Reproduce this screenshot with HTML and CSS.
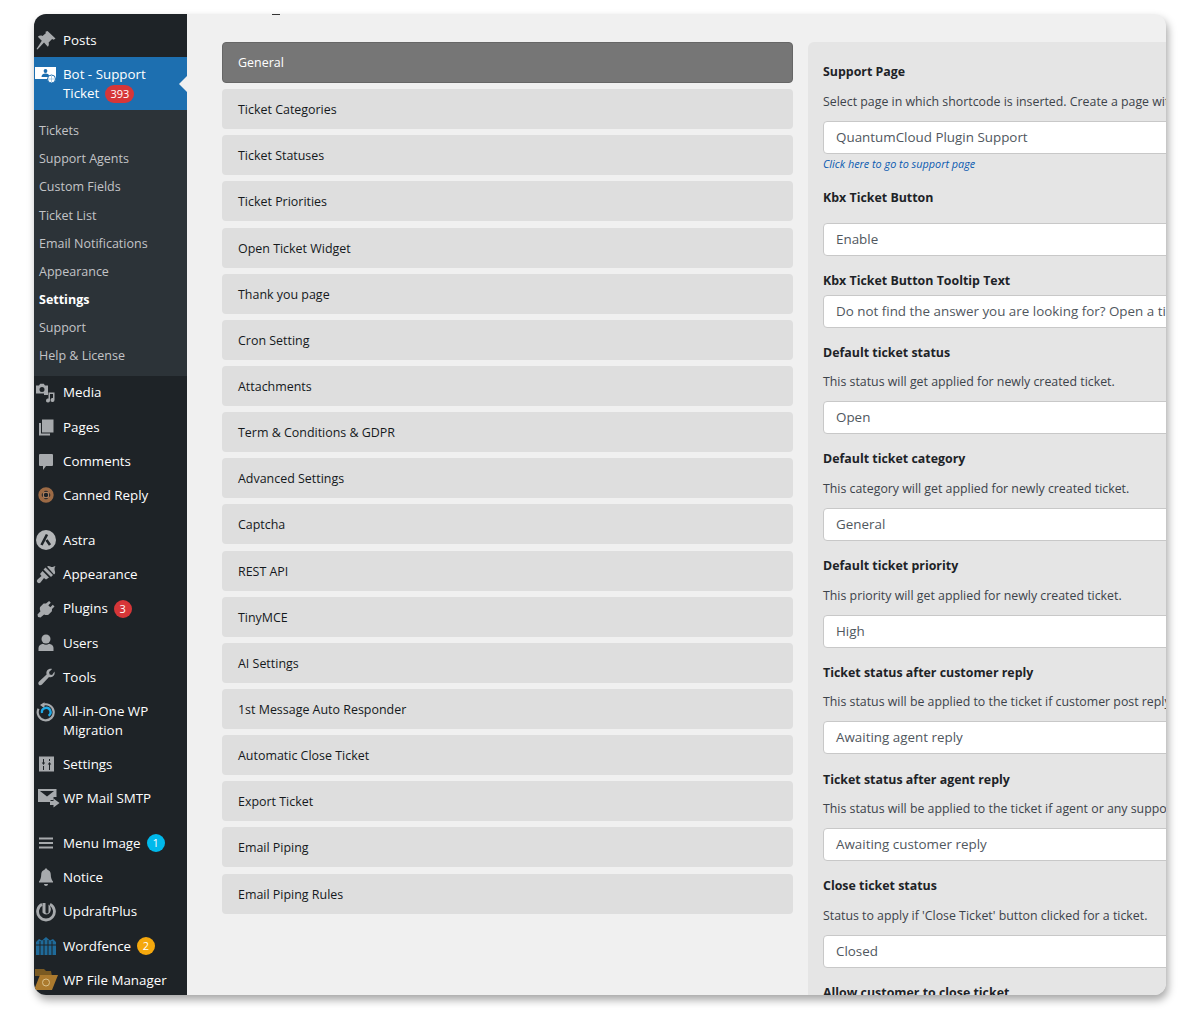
FILE: index.html
```html
<!DOCTYPE html>
<html lang="en">
<head>
<meta charset="utf-8">
<title>Support Ticket Settings</title>
<link rel="stylesheet" href="styles.css">
</head>
<body>
<div class="window">
  <nav class="sidebar">
    <a class="item"><svg class="ic" viewBox="0 0 20 20"><path d="M11.500 1l8 7.500-1.800 1.200-1.600-.7-3.500 3.500c.6 1.800.2 3.200-.8 4.300L8 12.500 1.500 19.500l-1-.5 5.300-8.300-4-4c1.300-1.100 3-1.400 4.700-.7L9.800 3.200 9.500 1.700z"/></svg><span>Posts</span></a>
    <div class="current">
      <svg class="ic-bot" viewBox="0 0 21 17"><path fill="#fff" d="M0 0h21v12H0z"/><circle cx="10.500" cy="4" r="1.900" fill="#1d6fb0"/><path fill="#1d6fb0" d="M6.500 10c0-2.500 1.800-3.500 4-3.500s4 1 4 3.500z"/><circle cx="16.500" cy="12" r="4" fill="#fff" stroke="#1d6fb0"/><path d="M16.500 8.500v7M13 12h7" stroke="#9dc3e0" stroke-width=".8"/></svg>
      <span>Bot - Support<br>Ticket<b class="badge red wide">393</b></span>
      <i class="arrow"></i>
    </div>
    <ul class="sub">
      <li>Tickets</li><li>Support Agents</li><li>Custom Fields</li><li>Ticket List</li><li>Email Notifications</li><li>Appearance</li><li class="on">Settings</li><li>Support</li><li>Help &amp; License</li>
    </ul>
    <div class="group first">
      <a class="item"><svg class="ic" viewBox="0 0 20 20"><path fill-rule="evenodd" d="M0 2.500h3l1.200-1.800h3.600L9 2.500h3v9.500H8v-1.500H0zM6 4a2.500 2.500 0 1 0 0 5 2.500 2.500 0 0 0 0-5z"/><path d="M12.500 9.500H18.500v7.500a2 2 0 1 1-1.500-1.900V11h-3v6.500a2 2 0 1 1-1.500-1.900z"/></svg><span>Media</span></a>
      <a class="item"><svg class="ic" viewBox="0 0 20 20"><path d="M6 2.500h11.500v13H6z"/><path d="M3 6h2v10.500h9V18.500H3z"/></svg><span>Pages</span></a>
      <a class="item"><svg class="ic" viewBox="0 0 20 20"><path d="M4 3h12a1 1 0 0 1 1 1v10a1 1 0 0 1-1 1h-6l-3 4v-4H4a1 1 0 0 1-1-1V4a1 1 0 0 1 1-1z"/></svg><span>Comments</span></a>
      <a class="item"><svg class="ic" viewBox="0 0 20 20"><circle cx="10" cy="10" r="6" fill="none" stroke="#9c6a45" stroke-width="3.400"/><path d="M5 5l10 10M15 5L5 15" stroke="#9c6a45" stroke-width="2.500"/><circle cx="10" cy="10" r="2.800" fill="#1e2327" stroke="#b98a66"/></svg><span>Canned Reply</span></a>
    </div>
    <div class="group">
      <a class="item"><svg class="ic" viewBox="0 0 20 20"><circle cx="10" cy="10" r="10" fill="#b4b6b8"/><path fill="none" stroke="#1e2327" stroke-width="2.600" d="M11 4.500L5.500 15M10.500 10l3.500 5"/></svg><span>Astra</span></a>
      <a class="item"><svg class="ic" viewBox="0 0 20 20"><path d="M9.500 3.500l7.500 7.500-2 2-7.500-7.500z"/><path d="M11 2.500c2-1.500 3.500.5 5 .5 1.300 0 2.500-.7 3.500-1-.7 1-1 2-1 3 0 1.500 1 3 .5 4.500l-1 1z"/><path d="M6.500 7l6.500 6.500-3 2-2-1.500-3.500 4.500a1.500 1.500 0 0 1-3-3l4-3.500-1.500-2z"/></svg><span>Appearance</span></a>
      <a class="item"><svg class="ic" viewBox="0 0 20 20"><path d="M13.100 2l1.700 1.700-2.500 2.500 2 2 2.500-2.500L18.500 7.400 16 10l-.1 2.300-3.500 3.500c-1.500.5-3 .3-4.300-.4L4.500 18.500 2 18l-.5-2.500 3-3.200c-.7-1.300-.9-2.800-.4-4.300l3.500-3.500L10 4.400z"/></svg><span>Plugins</span><b class="badge red">3</b></a>
      <a class="item"><svg class="ic" viewBox="0 0 20 20"><circle cx="10" cy="6" r="4.500"/><path d="M2.500 18v-3c0-2.500 2.500-4 4.500-4.200 1.800 1.200 4.200 1.200 6 0 2 .2 4.500 1.700 4.500 4.200v3z"/></svg><span>Users</span></a>
      <a class="item"><svg class="ic" viewBox="0 0 20 20"><path d="M18.500 4.500c.5 2-.1 4-1.700 5-1.300.8-2.700.8-3.800.4L6 17.500c-1 1-2.300 1-3.100.2s-.8-2.100.2-3.100l7.500-7.200c-.4-1.200-.3-2.600.5-3.800 1-1.500 3-2.100 5-1.700l-3 3 .5 2.500 2.500.6z"/></svg><span>Tools</span></a>
      <a class="item two"><svg class="ic" viewBox="0 0 20 20"><path fill="none" stroke-width="2.200" stroke="#a7aaad" d="M6 3.200a8 8 0 1 1-3.500 3.600"/><path d="M8.500.2v6L4 3z"/><path fill="none" stroke="#1fa9e6" stroke-width="2.300" d="M6 11a4.300 4.300 0 1 1 6.500 2.800"/></svg><span>All-in-One WP<br>Migration</span></a>
      <a class="item"><svg class="ic" viewBox="0 0 20 20"><path fill-rule="evenodd" d="M3 2.500h15v15H3zM7 5v3.500H5.700L7.500 11 9.200 8.500H8V5zM7 12v4h1v-4zM13 5v2h1V5zM13.500 8L11.700 10.500H13V16h1v-5.500h1.300z"/></svg><span>Settings</span></a>
      <a class="item"><svg class="ic mail" viewBox="0 0 24 20"><path d="M1 1h18.500v8h-3v3h-3v2H1zM3 3l7 5.500L17 3z" fill-rule="evenodd"/><path d="M16.500 10.500l6 4.500-6 4.500V17H13v-4h3.500z"/></svg><span>WP Mail SMTP</span></a>
    </div>
    <div class="group">
      <a class="item"><svg class="ic" viewBox="0 0 20 20"><path d="M3 4.500h14v2H3zM3 9h14v2H3zM3 13.500h14v2H3z"/></svg><span>Menu Image</span><b class="badge blue">1</b></a>
      <a class="item"><svg class="ic" viewBox="0 0 20 20"><path d="M10 1.500c.8 0 1.300.5 1.400 1.200 2.300.6 3.400 2.500 3.400 5 0 3 .8 5 2.200 6.800v1H3v-1c1.400-1.800 2.200-3.800 2.200-6.800 0-2.500 1.100-4.400 3.400-5 .1-.7.600-1.200 1.400-1.200zM8 17h4c0 1.200-.9 2-2 2s-2-.8-2-2z"/></svg><span>Notice</span></a>
      <a class="item"><svg class="ic" viewBox="0 0 20 20"><path fill="none" stroke="#a7aaad" stroke-width="2.800" d="M6 2.200a8.400 8.400 0 1 0 8 0"/><path d="M6.500 1h3v9a1.500 1.500 0 0 0 3 0V2.500a6 6 0 0 1 1.500 8 4.500 4.500 0 0 1-7.500 0z"/></svg><span>UpdraftPlus</span></a>
      <a class="item"><svg class="ic" viewBox="0 0 20 20"><path fill="#1f6a99" d="M0 6l3-3 3 1.500L10 1l4 3.500L17 3l3 3v13H0z"/><path stroke="#1e2327" d="M4 5v14M8 4v15M12 4v15M16 5v14M0 9h20"/></svg><span>Wordfence</span><b class="badge orange">2</b></a>
      <a class="item"><svg class="ic folder" viewBox="0 0 24 22"><path fill="#7a5a22" d="M1 0h9l2 2h5l1 5H1z"/><path fill="#ab7a2e" d="M6 6h18l-6 15H0z"/><circle cx="12" cy="13.500" r="3.500" fill="none" stroke="#dcc28c"/></svg><span>WP File Manager</span></a>
    </div>
  </nav>
  <main class="main">
    <i class="clip-mark"></i>
    <div class="tabs">
      <div class="tab active">General</div>
      <div class="tab">Ticket Categories</div>
      <div class="tab">Ticket Statuses</div>
      <div class="tab">Ticket Priorities</div>
      <div class="tab">Open Ticket Widget</div>
      <div class="tab">Thank you page</div>
      <div class="tab">Cron Setting</div>
      <div class="tab">Attachments</div>
      <div class="tab">Term &amp; Conditions &amp; GDPR</div>
      <div class="tab">Advanced Settings</div>
      <div class="tab">Captcha</div>
      <div class="tab">REST API</div>
      <div class="tab">TinyMCE</div>
      <div class="tab">AI Settings</div>
      <div class="tab">1st Message Auto Responder</div>
      <div class="tab">Automatic Close Ticket</div>
      <div class="tab">Export Ticket</div>
      <div class="tab">Email Piping</div>
      <div class="tab">Email Piping Rules</div>
    </div>
    <section class="panel">
      <div class="field page">
        <h4>Support Page</h4>
        <p>Select page in which shortcode is inserted. Create a page with the shortcode</p>
        <div class="input">QuantumCloud Plugin Support</div>
        <a class="link">Click here to go to support page</a>
      </div>
      <div class="field kbx">
        <h4>Kbx Ticket Button</h4>
        <div class="input">Enable</div>
      </div>
      <div class="field tight">
        <h4>Kbx Ticket Button Tooltip Text</h4>
        <div class="input">Do not find the answer you are looking for? Open a ticket for support</div>
      </div>
      <div class="field">
        <h4>Default ticket status</h4>
        <p>This status will get applied for newly created ticket.</p>
        <div class="input">Open</div>
      </div>
      <div class="field">
        <h4>Default ticket category</h4>
        <p>This category will get applied for newly created ticket.</p>
        <div class="input">General</div>
      </div>
      <div class="field">
        <h4>Default ticket priority</h4>
        <p>This priority will get applied for newly created ticket.</p>
        <div class="input">High</div>
      </div>
      <div class="field">
        <h4>Ticket status after customer reply</h4>
        <p>This status will be applied to the ticket if customer post reply on the ticket.</p>
        <div class="input">Awaiting agent reply</div>
      </div>
      <div class="field">
        <h4>Ticket status after agent reply</h4>
        <p>This status will be applied to the ticket if agent or any support staff reply.</p>
        <div class="input">Awaiting customer reply</div>
      </div>
      <div class="field">
        <h4>Close ticket status</h4>
        <p>Status to apply if 'Close Ticket' button clicked for a ticket.</p>
        <div class="input">Closed</div>
      </div>
      <div class="field">
        <h4>Allow customer to close ticket</h4>
      </div>
    </section>
  </main>
</div>
</body>
</html>
```
FILE: styles.css
```css
* { box-sizing: border-box; }
html, body { margin: 0; padding: 0; background: #fff; }
body { padding: 14px 34px 15px; font-family: "Open Sans", "Noto Sans", sans-serif; font-size: 13.350px; color: #1d2327; }
.window { display: flex; height: 981px; border-radius: 12px; overflow: hidden; box-shadow: 2px 5px 8px rgba(0,0,0,.35); background: #f0f0f0; }
.sidebar { flex: none; width: 153px; height: 100%; overflow: hidden; background: #1e2327; color: #fff; padding-top: 9px; font-size: 13.350px; }
.item { display: flex; align-items: center; height: 34.250px; position: relative; line-height: 18.500px; white-space: nowrap; }
.item.two { height: 52.600px; }
.item > span { margin-left: 29px; }
.ic { position: absolute; left: 2px; top: 50%; width: 20px; height: 20px; margin-top: -10px; fill: #a7aaad; }
.ic.mail { left: 3px; width: 24px; }
.ic.folder { left: 0; top: 50%; width: 24px; height: 22px; margin-top: -11px; }
.two .ic { top: 8px; margin-top: 0; }
.current { position: relative; height: 53px; background: #1d6fb0; color: #fff; padding: 8px 0 0 29px; line-height: 19px; }
.ic-bot { position: absolute; left: 1px; top: 10px; width: 21px; height: 17px; }
.arrow { position: absolute; right: 0; top: 19px; border-style: solid; border-color: transparent #f0f0f0 transparent transparent; border-width: 8px 8px 8px 0; }
.badge { display: inline-block; min-width: 18px; height: 18px; margin-left: 6px; border-radius: 9px; text-align: center; font-weight: 400; font-size: 11px; line-height: 18px; color: #fff; }
.badge.wide { padding: 0 5px; min-width: 28px; }
.red { background: #d63638; }
.blue { background: #00b9eb; }
.orange { background: #f5a80d; }
.sub { list-style: none; margin: 0; padding: 7px 0 5.500px 5px; background: #2c3338; color: #c3c4c7; font-size: 12.500px; }
.sub li { height: 28.100px; line-height: 28.100px; }
.sub .on { color: #fff; font-weight: 700; }
.group { margin-top: 10.500px; }
.group.first { margin-top: 0; }
.main { position: relative; flex: 1; min-width: 0; display: flex; align-items: flex-start; overflow: hidden; padding: 28px 0 0 35px; }
.clip-mark { position: absolute; left: 85px; top: 0; width: 8px; height: 1px; background: #333; }
.tabs { flex: none; width: 571px; display: flex; flex-direction: column; gap: 6.150px; margin-right: 15px; }
.tab { height: 40px; padding-left: 16px; line-height: 41px; border-radius: 4px; background: #dedede; color: #15191c; font-size: 12.450px; }
.tab.active { height: 41px; background: #767676; color: #fff; border: 1px solid #666; padding-left: 15px; line-height: 39px; }
.panel { flex: none; width: 560px; height: 960px; padding: 19px 0 0 15px; background: #e5e5e5; border-radius: 6px 0 0 0; white-space: nowrap; }
.field { margin-bottom: 14.300px; }
.field h4 { margin: 0 0 10.500px; height: 20px; line-height: 22px; font-size: 12.400px; font-weight: 700; color: #1d2327; }
.field p { margin: 0 0 9px; height: 20px; line-height: 20px; font-size: 12.350px; color: #3c434a; }
.input { height: 33px; padding-left: 12px; line-height: 30px; background: #fff; border: 1px solid #c8c8c8; border-radius: 4px; font-size: 13.400px; color: #50575e; overflow: hidden; }
.link { display: block; height: 20px; line-height: 20px; font-size: 10.850px; font-style: italic; color: #0a5ab0; }
.field.page { margin-bottom: 13px; }
.kbx h4 { margin-bottom: 16px; }
.kbx { margin-bottom: 14px; }
.tight h4 { margin-bottom: 5px; }
.tight { margin-bottom: 14px; }
```
